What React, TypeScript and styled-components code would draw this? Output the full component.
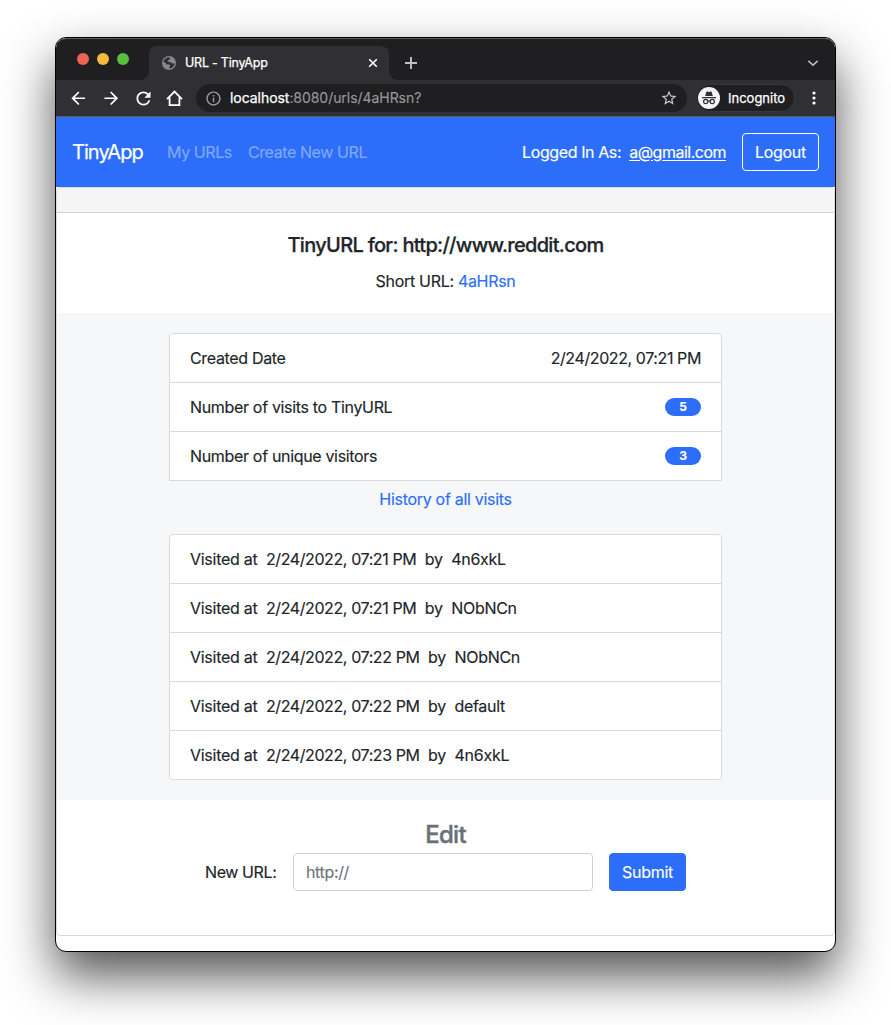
import React from "react";
import styled, { createGlobalStyle } from "styled-components";
import { MdArrowBack, MdArrowForward, MdRefresh, MdInfoOutline, MdStarBorder } from "react-icons/md";

const blue = "#2c6ef9";
const line = "#d9dadb";

const GlobalStyle = createGlobalStyle`
  *, *::before, *::after { box-sizing: border-box; }
  body {
    margin: 0;
    background: #fff;
    color: #212529;
    font: 400 16px/24px Inter, "Liberation Sans", sans-serif;
    -webkit-text-stroke: 0.15px currentColor;
    overflow: hidden;
  }
`;

const Desktop = styled.main`
  height: 1025px;
  padding: 37px 55px 73px;
`;

const Window = styled.div`
  width: 781px;
  height: 915px;
  border: 1px solid #000;
  border-radius: 11px;
  background: #fff;
  overflow: hidden;
  box-shadow: 0 24px 50px rgba(0, 0, 0, 0.68);
`;

const Chrome = styled.header`
  height: 79px;
  background: #303034;
  border-radius: 10px 10px 0 0;
  border-bottom: 1px solid #5b5b5e;
  color: #fff;
`;

const TabStrip = styled.div`
  height: 42px;
  display: flex;
  align-items: flex-end;
  padding-right: 16px;
  background: #1f1f21;
  border: 1px solid #5d5d5f;
  border-width: 1px 0 0;
  border-radius: 10px 10px 0 0;
`;

const Lights = styled.div`
  display: flex;
  gap: 8px;
  width: 93px;
  padding: 0 0 15px 21px;
`;

const Light = styled.span<{ $color: string }>`
  width: 12px;
  height: 12px;
  border-radius: 50%;
  background: ${(p) => p.$color};
`;

const Tab = styled.div`
  position: relative;
  width: 240px;
  height: 34px;
  display: flex;
  align-items: center;
  padding: 0 11px 0 12px;
  background: #303034;
  border-radius: 8px 8px 0 0;
  &::before, &::after {
    content: "";
    position: absolute;
    bottom: 0;
    width: 8px;
    height: 8px;
  }
  &::before {
    left: -8px;
    background: radial-gradient(circle at 0 0, transparent 7.5px, #303034 8px);
  }
  &::after {
    right: -8px;
    background: radial-gradient(circle at 100% 0, transparent 7.5px, #303034 8px);
  }
`;

const TabTitle = styled.span`
  flex: 1;
  margin-left: 8px;
  font-size: 12.5px;
  line-height: 16px;
  letter-spacing: -0.23px;
  -webkit-text-stroke: 0.25px #fff;
`;

const StripIcon = styled.svg<{ $left?: number }>`
  display: block;
  margin-left: ${(p) => (p.$left === undefined ? "auto" : `${p.$left}px`)};
  margin-bottom: 9px;
`;

const Toolbar = styled.div`
  height: 36px;
  display: flex;
  align-items: center;
  padding: 0 15px 0 12px;
`;

const NavIcons = styled.div`
  display: flex;
  align-items: center;
  gap: 12px;
  width: 128px;
`;

const AddressBar = styled.div`
  width: 491px;
  height: 28px;
  display: flex;
  align-items: center;
  padding: 0 9px;
  border-radius: 14px;
  background: #1f1f21;
`;

const Address = styled.span`
  flex: 1;
  margin-left: 8px;
  font-size: 14px;
  line-height: 20px;
  letter-spacing: -0.05px;
  color: #95989b;
`;

const Host = styled.span`
  color: #fff;
  -webkit-text-stroke: 0.25px #fff;
`;

const Incognito = styled.div`
  width: 99px;
  height: 28px;
  display: flex;
  align-items: center;
  gap: 8px;
  margin: 0 17px 0 9px;
  padding-left: 1px;
  border: 1px solid #37373a;
  border-radius: 14px;
  background: #1f1f21;
  font-size: 13px;
  -webkit-text-stroke: 0.25px #fff;
`;

const Navbar = styled.nav`
  height: 70px;
  display: flex;
  align-items: center;
  padding: 0 16px;
  background: ${blue};
  color: #fff;
`;

const Brand = styled.a`
  width: 95px;
  font-size: 20px;
  line-height: 30px;
  letter-spacing: -0.95px;
  -webkit-text-stroke: 0.25px #fff;
`;

const NavLink = styled.a`
  margin-right: 16px;
  color: #80a9fb;
  letter-spacing: -0.4px;
`;

const Account = styled.div`
  display: flex;
  align-items: center;
  margin-left: auto;
  letter-spacing: -0.4px;
`;

const Email = styled.a`
  margin: 0 16px 0 8px;
  letter-spacing: -0.5px;
  text-decoration: underline;
  text-underline-offset: 2px;
`;

const Button = styled.button<{ $outline?: boolean }>`
  width: 77px;
  height: 38px;
  padding: 0;
  border: 1px solid ${(p) => (p.$outline ? "#fff" : blue)};
  border-radius: 4px;
  background: ${blue};
  color: #fff;
  font: inherit;
  letter-spacing: -0.3px;
`;

const Card = styled.section`
  height: 749px;
  border: 1px solid ${line};
  border-radius: 4px;
  overflow: hidden;
  text-align: center;
  letter-spacing: -0.3px;
`;

const CardHeader = styled.div`
  height: 25px;
  border-bottom: 1px solid #d0d1d2;
  background: #f5f5f5;
`;

const Intro = styled.div`
  height: 100px;
  padding-top: 20px;
`;

const Title = styled.h1`
  margin: 0 0 12px;
  font-size: 20px;
  line-height: 24px;
  font-weight: 500;
  letter-spacing: -0.7px;
  -webkit-text-stroke: 0.25px #212529;
`;

const Link = styled.a`
  color: ${blue};
`;

const Stats = styled.div`
  height: 487px;
  padding: 20px 112px;
  background: #f6f7f9;
`;

const List = styled.ul<{ $openBottom?: boolean }>`
  margin: 0;
  padding: 0;
  list-style: none;
  background: #fff;
  border: 1px solid ${line};
  border-radius: ${(p) => (p.$openBottom ? "4px 4px 0 0" : "4px")};
`;

const Row = styled.li`
  height: 49px;
  display: flex;
  align-items: center;
  justify-content: space-between;
  padding: 0 20px;
  border-bottom: 1px solid ${line};
  letter-spacing: -0.33px;
  white-space: pre;
  &:last-child { height: 48px; border-bottom: 0; }
`;

const Visit = styled.span`
  letter-spacing: -0.27px;
`;

const DateTime = styled.span`
  letter-spacing: -0.4px;
`;

const Badge = styled.span`
  width: 36px;
  height: 18px;
  border-radius: 9px;
  background: ${blue};
  color: #fff;
  font-size: 12px;
  font-weight: 700;
  line-height: 18px;
  text-align: center;
`;

const History = styled.div`
  padding: 6px 0 23px;
`;

const EditTitle = styled.h2`
  margin: 20px 0 4px;
  color: #6a7178;
  font-size: 24px;
  line-height: 29px;
  font-weight: 500;
  letter-spacing: -0.7px;
  -webkit-text-stroke: 0.4px #6a7178;
`;

const EditForm = styled.form`
  display: flex;
  align-items: center;
  justify-content: center;
`;

const Label = styled.label`
  width: 88px;
  text-align: left;
  letter-spacing: -0.4px;
`;

const Input = styled.input`
  width: 300px;
  height: 38px;
  margin-right: 16px;
  padding: 0 12px;
  border: 1px solid #ccd1d8;
  border-radius: 4px;
  font: inherit;
  letter-spacing: -0.35px;
  &::placeholder { color: #6c757d; opacity: 1; }
`;

const visits = [
  ["07:21", "4n6xkL"],
  ["07:21", "NObNCn"],
  ["07:22", "NObNCn"],
  ["07:22", "default"],
  ["07:23", "4n6xkL"],
];

export default function App() {
  return (
    <Desktop>
      <GlobalStyle />
      <Window>
        <Chrome>
          <TabStrip>
            <Lights>
              <Light $color="#ed6358" />
              <Light $color="#f4b93e" />
              <Light $color="#58c041" />
            </Lights>
            <Tab>
              <svg width="16" height="16" viewBox="0 0 16 16">
                <circle cx="8" cy="8" r="7" fill="#83898f" />
                <path
                  d="M2.3 6.9C3 4.200 5 2.600 8 2.300L9.300 3.200 8.700 4.500 7 5.200 6.700 6.600 9.800 7.300 11 8.600 13.600 8.300C13.500 11 11.500 13.200 8.800 13.700L8.300 12.200 9.300 10.800 8.200 9.500 5.200 9.200 4.200 7.600Z"
                  fill="#303034"
                />
              </svg>
              <TabTitle>URL - TinyApp</TabTitle>
              <svg width="10" height="10" viewBox="0 0 10 10" stroke="#fff" strokeWidth="1.6">
                <path d="M1.2 1.2 8.8 8.8M8.8 1.2 1.2 8.8" />
              </svg>
            </Tab>
            <StripIcon $left={16} width="12" height="16" viewBox="0 0 12 16" stroke="#bfc3c7" strokeWidth="1.9">
              <path d="M0 8H12M6 2V14" />
            </StripIcon>
            <StripIcon width="12" height="16" viewBox="0 0 12 16" fill="none" stroke="#b9bcc0" strokeWidth="1.6">
              <path d="m1.3 5.8 4.7 4.4 4.7-4.4" />
            </StripIcon>
          </TabStrip>
          <Toolbar>
            <NavIcons>
              <MdArrowBack size={20.5} />
              <MdArrowForward size={20.5} />
              <MdRefresh size={21} />
              <svg width="18" height="18" viewBox="0 0 18 18" fill="none" stroke="#fff" strokeWidth="1.8">
                <path d="M1 10.200 8.500 2.500l7.500 7.700M3.600 8.400v7.700h9.800V8.400" />
              </svg>
            </NavIcons>
            <AddressBar>
              <MdInfoOutline size={17} color="#9a9da1" />
              <Address>
                <Host>localhost</Host>:8080/urls/4aHRsn?
              </Address>
              <MdStarBorder size={18} color="#c6c8ca" />
            </AddressBar>
            <Incognito>
              <svg width="22" height="22" viewBox="0 0 22 22">
                <circle cx="11" cy="11" r="11" fill="#f1f3f4" />
                <path d="M7.2 9 8.3 5.1q.3-.8 1.1-.5l1.6.5 1.6-.5q.8-.3 1.1.5L14.800 9z" fill="#303134" />
                <path d="M4 10.6h14" stroke="#303134" strokeWidth="1.2" />
                <g fill="none" stroke="#303134" strokeWidth="1.2">
                  <circle cx="7.7" cy="14.5" r="2.1" />
                  <circle cx="14.3" cy="14.5" r="2.1" />
                  <path d="M9.8 14.2q1.2-.7 2.4 0" />
                </g>
              </svg>
              Incognito
            </Incognito>
            <svg width="4" height="16" viewBox="0 0 4 16" fill="#fff">
              <circle cx="2" cy="3" r="1.6" />
              <circle cx="2" cy="8" r="1.6" />
              <circle cx="2" cy="13" r="1.6" />
            </svg>
          </Toolbar>
        </Chrome>
        <Navbar>
          <Brand>TinyApp</Brand>
          <NavLink>My URLs</NavLink>
          <NavLink>Create New URL</NavLink>
          <Account>
            <span>Logged In As:</span>
            <Email>a@gmail.com</Email>
            <Button $outline>Logout</Button>
          </Account>
        </Navbar>
        <Card>
          <CardHeader />
          <Intro>
            <Title>TinyURL for: http://www.reddit.com</Title>
            <div>
              Short URL: <Link>4aHRsn</Link>
            </div>
          </Intro>
          <Stats>
            <List $openBottom>
              <Row>
                <span>Created Date</span>
                <DateTime>2/24/2022, 07:21 PM</DateTime>
              </Row>
              <Row>
                <span>Number of visits to TinyURL</span>
                <Badge>5</Badge>
              </Row>
              <Row>
                <span>Number of unique visitors</span>
                <Badge>3</Badge>
              </Row>
            </List>
            <History>
              <Link>History of all visits</Link>
            </History>
            <List>
              {visits.map(([time, user], i) => (
                <Row key={i}>
                  <Visit>
                    {"Visited at  "}
                    <DateTime>{`2/24/2022, ${time} PM`}</DateTime>
                    {`  by  ${user}`}
                  </Visit>
                </Row>
              ))}
            </List>
          </Stats>
          <EditTitle>Edit</EditTitle>
          <EditForm>
            <Label>New URL:</Label>
            <Input placeholder="http://" />
            <Button type="button">Submit</Button>
          </EditForm>
        </Card>
      </Window>
    </Desktop>
  );
}
